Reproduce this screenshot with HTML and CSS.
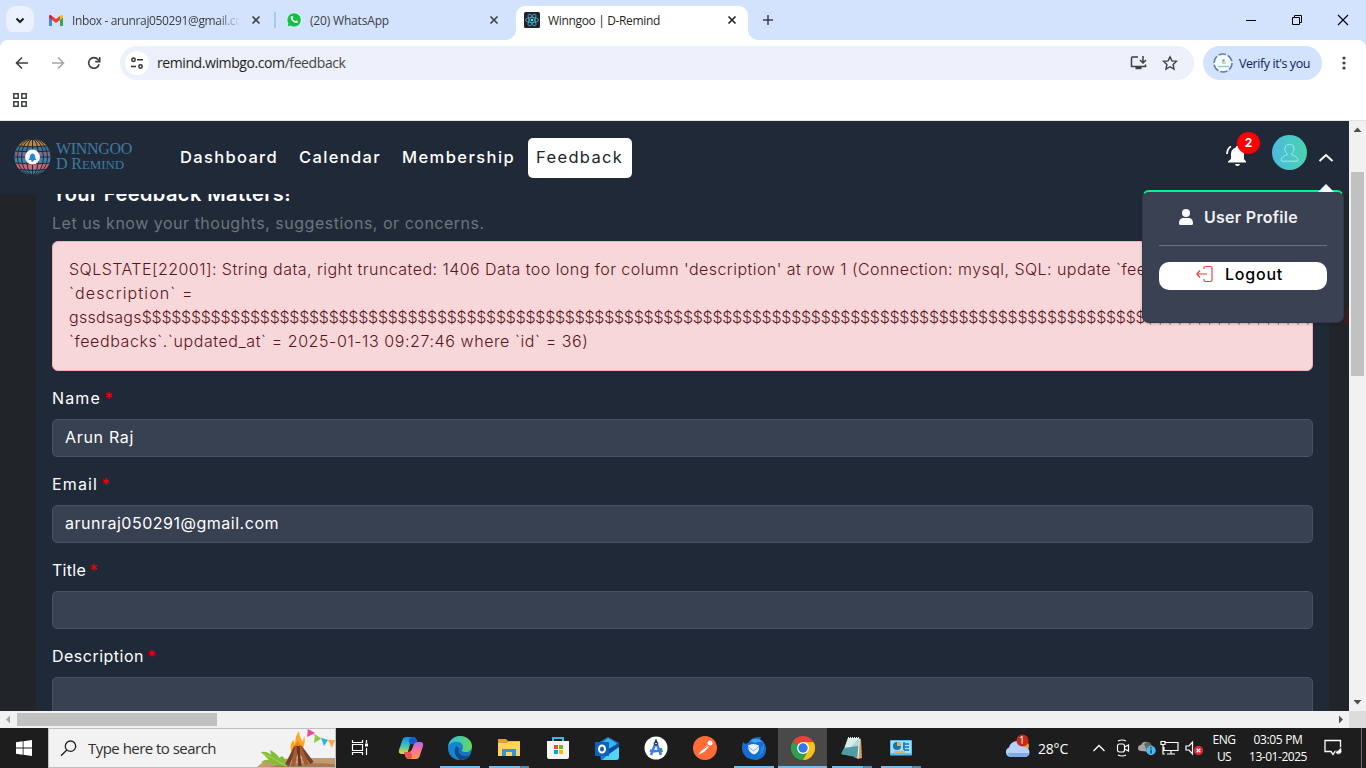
FILE: index.html
```html
<!DOCTYPE html>
<html lang="en">
<head>
<meta charset="utf-8">
<title>Winngoo | D-Remind</title>
<link rel="stylesheet" href="styles.css">
</head>
<body>
<div class="screen">
  <div class="tabstrip">
    <div class="tab-search"><svg width="28" height="28"><path d="M10.500 12.500l3.500 3.500 3.500-3.500" fill="none" stroke="#1f1f1f" stroke-width="2"/></svg></div>
    <div class="tab tab-mail">
      <svg width="14" height="11" viewBox="0 0 14 11"><path d="M0 2v8.200q0 .8.8.8H3V4.500z" fill="#4285f4"/><path d="M14 2v8.200q0 .8-.8.8H11V4.500z" fill="#34a853"/><path d="M11 1.200v3.600l3-2.300V1.500C14 0 12.500-.4 11.500.5z" fill="#fbbc04"/><path d="M3 1.200v3.600L0 2.500V1.500C0 0 1.500-.4 2.500.5z" fill="#c5221f"/><path d="M3 1l4 3.100L11 1v3.900L7 8 3 4.900z" fill="#ea4335"/></svg>
      <span class="tab-title fade">Inbox - arunraj050291@gmail.co</span>
      <svg class="close" width="10" height="10"><path d="M1.500 1.500l7 7m0-7l-7 7" stroke="#3c4043" stroke-width="1.600"/></svg>
    </div>
    <div class="tab tab-chat">
      <svg width="16" height="16" viewBox="0 0 16 16"><path d="M1 15l1-3.600A7 7 0 1 1 4.600 14z" fill="#0dc143" stroke="#fff" stroke-width=".6"/><path d="M5.400 4.200c-1.300.8-1 2.600.5 4.300s3.700 3 5 2.500 1.100-1.700.7-2L10 8.300l-.9.900C8 8.700 7.200 7.900 6.700 6.900l.7-.9-.7-1.600q-.4-.6-1.300-.2z" fill="#fff"/></svg>
      <span class="tab-title t-chat">(20) WhatsApp</span>
      <svg class="close" width="10" height="10"><path d="M1.500 1.500l7 7m0-7l-7 7" stroke="#3c4043" stroke-width="1.600"/></svg>
    </div>
    <div class="tab tab-active">
      <svg width="16" height="16" viewBox="0 0 16 16"><rect width="16" height="16" rx="1.500" fill="#20232a"/><g fill="none" stroke="#4fb3cf" stroke-width=".8"><ellipse cx="8" cy="8" rx="6.500" ry="2.600"/><ellipse cx="8" cy="8" rx="6.500" ry="2.600" transform="rotate(60 8 8)"/><ellipse cx="8" cy="8" rx="6.500" ry="2.600" transform="rotate(120 8 8)"/></g><circle cx="8" cy="8" r="1.300" fill="#61dafb"/></svg>
      <span class="tab-title t-active">Winngoo | D-Remind</span>
      <svg class="close" width="10" height="10"><path d="M1.500 1.500l7 7m0-7l-7 7" stroke="#1f1f1f" stroke-width="1.600"/></svg>
    </div>
    <svg class="new-tab" width="12" height="12"><path d="M6 1v10M1 6h10" stroke="#3c4043" stroke-width="1.500"/></svg>
    <div class="window-controls">
      <svg width="46" height="40"><path d="M18 20.500h10" stroke="#000"/></svg>
      <svg width="46" height="40"><path d="M18.500 17.500h7v7h-7zM20.500 17.500v-2h7v7h-2" fill="none" stroke="#000"/></svg>
      <svg width="46" height="40"><path d="M18 15l10 10m0-10L18 25" stroke="#000" stroke-width="1.100"/></svg>
    </div>
  </div>

  <div class="toolbar">
    <svg class="nav-icon" width="16" height="16"><path d="M14 8H3M8 2.500L2.500 8 8 13.500" fill="none" stroke="#3c4043" stroke-width="1.600"/></svg>
    <svg class="nav-icon" width="16" height="16"><path d="M2 8h11M8 2.500L13.500 8 8 13.500" fill="none" stroke="#a5a7aa" stroke-width="1.600"/></svg>
    <svg class="nav-icon" width="16" height="16"><path d="M13.100 9.200A5.300 5.300 0 1 1 12 4.500L13.500 6" fill="none" stroke="#3c4043" stroke-width="1.600"/><path d="M13.700 2v4.600H9.200" fill="none" stroke="#3c4043" stroke-width="1.600"/></svg>
    <div class="omnibox">
      <span class="site-info"><svg width="14" height="14" fill="none" stroke="#303134" stroke-width="1.500"><circle cx="3.500" cy="3.800" r="1.700"/><path d="M7 3.800h6M1 10.500h5"/><circle cx="10.500" cy="10.500" r="1.700"/></svg></span>
      <span class="url">remind.wimbgo.com<i>/feedback</i></span>
      <svg class="install" width="18" height="16"><path d="M8 2H2.500Q1.500 2 1.500 3v8.500h14V9.500" fill="none" stroke="#3c4043" stroke-width="1.500"/><path d="M5.500 12h6v2.200h-6z" fill="#3c4043"/><path d="M13 1v6.500M10 5l3 3 3-3" fill="none" stroke="#3c4043" stroke-width="1.500"/></svg>
      <svg width="16" height="16"><path d="M8 1.800l1.900 4.100 4.500.5-3.300 3.100.9 4.500L8 11.700 4 14l.9-4.500L1.600 6.400l4.500-.5z" fill="none" stroke="#3c4043" stroke-width="1.400"/></svg>
    </div>
    <div class="profile-chip">
      <svg width="20" height="20"><circle cx="10" cy="10" r="9" fill="#f5fafb" stroke="#5f7fad" stroke-width="1.500" stroke-dasharray="7.500 1.900"/><circle cx="10.500" cy="7.500" r="1.300" fill="#7d9bb8"/><path d="M9 10h4" stroke="#8fb1b1"/><path d="M5 13.500h11" stroke="#8ccdbf" stroke-width="1.300"/></svg>
      <span class="verify">Verify it's you</span>
    </div>
    <svg class="kebab" width="4" height="16" fill="#3c4043"><circle cx="2" cy="3" r="1.600"/><circle cx="2" cy="8" r="1.600"/><circle cx="2" cy="13" r="1.600"/></svg>
  </div>
  <div class="bookmarks"><svg width="14" height="14" fill="none" stroke="#3c4043" stroke-width="1.500"><path d="M.8.800h4.400v4.400H.8zM8.800.800h4.400v4.400H8.800zM.8 8.800h4.400v4.400H.8zM8.800 8.800h4.400v4.400H8.800z"/></svg></div>

  <div class="viewport">
    <div class="page">
      <header class="site-header">
        <div class="brand">
          <svg width="37" height="38" viewBox="0 0 37 38"><defs><clipPath id="globe"><circle cx="18.500" cy="19" r="18"/></clipPath></defs><g clip-path="url(#globe)"><path d="M0 0h37v8H0z" fill="#b98a45"/><path d="M0 8h37v6H0z" fill="#3f7692"/><path d="M0 13h37v7H0z" fill="#776b91"/><path d="M0 19h37v6H0z" fill="#3f86a8"/><path d="M0 25h37v6H0z" fill="#c66a76"/><path d="M0 31h37v7H0z" fill="#427f9b"/><g fill="none" stroke="#202938"><path d="M18.500 0v38M0 7.500q18.500 3 37 0M0 13q18.500 2 37 0M0 19h37M0 25q18.500 2 37 0M0 31q18.500 3 37 0"/><ellipse cx="18.500" cy="19" rx="6" ry="18"/><ellipse cx="18.500" cy="19" rx="11" ry="18"/><ellipse cx="18.500" cy="19" rx="15" ry="18"/></g></g><circle cx="18.500" cy="19" r="7.500" fill="#f4f7fa"/><path d="M14.500 22q1.500-1.200 1.500-4 .3-2.200 2.500-2.500 2.200.3 2.500 2.500 0 2.800 1.500 4z" fill="#2b87cf"/><circle cx="18.500" cy="22.500" r="1.200" fill="#2b87cf"/></svg>
          <div class="brand-name"><span class="b1">WINNGOO</span><span class="b2">D R<small>EMIND</small></span></div>
        </div>
        <nav class="menu">
          <span class="m m1">Dashboard</span><span class="m m2">Calendar</span><span class="m m3">Membership</span><span class="m-active"><span class="m m4">Feedback</span></span>
        </nav>
        <div class="account">
          <div class="bell"><svg width="22" height="24" viewBox="0 0 22 24"><path d="M2 18.500h18v-1l-2-2.500V10q0-5-4.800-6.500a1.700 1.700 0 0 0-3.400 0Q5 5 5 10v5l-3 2.500z" fill="#fff"/><path d="M9 20h5q-.4 2-2.500 2T9 20z" fill="#fff"/><path d="M1 10q.2-5.500 4-7.500" fill="none" stroke="#fff" stroke-width="1.800"/></svg><span class="badge">2</span></div>
          <svg width="35" height="35" viewBox="0 0 35 35"><defs><linearGradient id="av"><stop stop-color="#4abbe0"/><stop offset="1" stop-color="#4bd3ad"/></linearGradient></defs><circle cx="17.500" cy="17.500" r="17.500" fill="url(#av)"/><path d="M17.500 9.300c-3 0-4.600 2-4.600 4.500 0 2 .9 3.700 2.300 4.900v1.100c-2.800 1.200-6 1.700-6 5.700 0 .5.300.7.700.7h15.200c.5 0 .7-.2.700-.7 0-4-3.200-4.500-6-5.700v-1.100c1.400-1.200 2.300-2.900 2.300-4.900 0-2.500-1.600-4.500-4.600-4.500z" fill="none" stroke="#a3ebe5"/></svg>
          <svg class="caret" width="16" height="10"><path d="M1.500 8L8 2l6.500 6" fill="none" stroke="#fff" stroke-width="2"/></svg>
        </div>
      </header>
      <main class="panel">
        <h1 class="title"><span class="ttl">Your Feedback Matters!</span></h1>
        <p class="subtitle"><span class="sub">Let us know your thoughts, suggestions, or concerns.</span></p>
        <div class="alert">
          <div><span class="a1">SQLSTATE[22001]: String data, right truncated: 1406 Data too long for column 'description' at row 1 (Connection: mysql, SQL: update `feed</span></div>
          <div><span class="a2">`description` =</span></div>
          <div><span class="a3">gssdsags</span><span class="dollars">$$$$$$$$$$$$$$$$$$$$$$$$$$$$$$$$$$$$$$$$$$$$$$$$$$$$$$$$$$$$$$$$$$$$$$$$$$$$$$$$$$$$$$$$$$$$$$$$$$$$$$$$$$$$$$$$$$$$$$$$$$$$$</span></div>
          <div><span class="a4">`feedbacks`.`updated_at` = 2025-01-13 09:27:46 where `id` = 36)</span></div>
        </div>
        <label class="field"><span class="lbl"><span class="l1">Name</span> <b>*</b></span><span class="input"><span class="v1">Arun Raj</span></span></label>
        <label class="field"><span class="lbl"><span class="l2">Email</span> <b>*</b></span><span class="input"><span class="v2">arunraj050291@gmail.com</span></span></label>
        <label class="field"><span class="lbl"><span class="l3">Title</span> <b>*</b></span><span class="input"></span></label>
        <label class="field"><span class="lbl"><span class="l4">Description</span> <b>*</b></span><span class="input tall"></span></label>
      </main>
      <div class="dropdown">
        <div class="profile-link"><svg width="14" height="16"><circle cx="7" cy="4" r="4" fill="#f8f9fa"/><path d="M0 14.500C0 10.500 2 9 4.500 9h5c2.500 0 4.500 1.500 4.500 5.500q0 1.500-1.500 1.500h-11Q0 16 0 14.500z" fill="#f8f9fa"/></svg><span class="up">User Profile</span></div>
        <div class="divider"></div>
        <div class="logout"><svg width="17" height="18"><path d="M8 4V3q0-1.500 1.500-1.500h5Q16 1.500 16 3v12q0 1.500-1.500 1.500h-5Q8 16.500 8 15v-1" fill="none" stroke="#ff3b43" stroke-width="1.200"/><path d="M11 9H1M4 5.500L.8 9 4 12.500" fill="none" stroke="#ff3b43" stroke-width="1.200"/></svg><span class="lo">Logout</span></div>
      </div>
    </div>
    <div class="vscroll"><svg width="17" height="17"><path d="M4.500 11h8L8.500 6.500z" fill="#505050"/></svg><div class="vthumb"></div><svg class="end" width="17" height="17"><path d="M4.500 6h8l-4 4.500z" fill="#505050"/></svg></div>
  </div>
  <div class="hscroll"><svg width="17" height="17"><path d="M10 4.500v8L6 8.500z" fill="#a3a3a3"/></svg><div class="hthumb"></div><svg class="end-h" width="17" height="17"><path d="M7 4.500v8l4-4z" fill="#505050"/></svg><div class="corner"></div></div>

  <div class="taskbar">
    <div class="start"><svg width="16" height="16" fill="#fff"><path d="M0 2.200L6.700 1.300v6.200H0zM7.500 1.200L16 0v7.500H7.500zM0 8.400h6.700v6.300L0 13.800zM7.500 8.400H16V16l-8.500-1.200z"/></svg></div>
    <div class="search">
      <svg width="17" height="17"><circle cx="10.500" cy="6.200" r="5.200" fill="none" stroke="#222" stroke-width="1.300"/><path d="M6.800 10L1 15.800" stroke="#222" stroke-width="1.400"/></svg>
      <span class="st">Type here to search</span>
      <svg class="campfire" width="78" height="38" viewBox="0 0 78 38"><path d="M0 38q8-8 22-8l30-1h26v9z" fill="#c39a72"/><path d="M12 38q25-6 66-3v3z" fill="#a97a53"/><path d="M30 37Q18 37 12 33l-8 1q3-4 8-3L4 23q6-1 10 3l-1-5q8 4 9 8l3-2q5 4 5 10z" fill="#83bd35"/><path d="M7 25q10 4 22 12" stroke="#a8d65c" fill="none"/><path d="M36 25q-5-6 0-14 2 3 2 5 0-9 4-14 0 6 4 11l1-6q2 6-1 12l-2 6z" fill="#ffa51f"/><path d="M37 24q-1-6 4-12 4 6 3 14z" fill="#ff7b19"/><path d="M39 23l3-7 2 8z" fill="#ffdf58"/><g stroke-width="4" fill="none"><path d="M39 18L30 36M43 18l12 16" stroke="#77402a"/><path d="M40 17l-4 20M42 17l8 19" stroke="#a45c35"/><path d="M41 17l2 20" stroke="#69351f" stroke-width="3"/></g><path d="M50 1q14 11 28 11" fill="none" stroke="#aaa" stroke-width=".7"/><path d="M51 0l7 4-8 4z" fill="#f0469d"/><path d="M58 5l6 5-7 4z" fill="#8dcc3c"/><path d="M64 9l7 2-4 6z" fill="#29b5df"/><path d="M71 11h7l-3 8z" fill="#f8ad43"/></svg>
    </div>
    <div class="task view"><svg width="18" height="18" fill="none" stroke="#fff" stroke-width="1.200"><path d="M1.500 1v2.500h10V1M1.500 5.500h10v6h-10zM1.500 16v-2.500h10V16M15.500 1v3M15.500 9v7"/><path d="M14 4.500h3v3h-3z" fill="#fff" stroke="none"/></svg></div>
    <div class="task"><svg width="26" height="24" viewBox="0 0 26 24"><defs><linearGradient id="c1" x2="0" y2="1"><stop stop-color="#168be7"/><stop offset=".5" stop-color="#38c4b8"/><stop offset="1" stop-color="#f2d531"/></linearGradient><linearGradient id="c2" x2="0" y2="1"><stop stop-color="#b765f0"/><stop offset=".5" stop-color="#fb7494"/><stop offset="1" stop-color="#ff9b45"/></linearGradient></defs><path d="M8 1h7q3 0 4 4l1 3h-4q-3 0-4 3l-2 5q-1 2-4 2H4q-4 0-3-4l3-9Q5 1 8 1z" fill="url(#c1)"/><path d="M15 1q3 0 4 4l1 3h-4q-2 0-3 2L11 6q-1-4 4-5z" fill="#1857cc"/><path d="M18 23h-7q-3 0-4-4l-1-3h4q3 0 4-3l2-5q1-2 4-2h2q4 0 3 4l-3 9q-1 4-4 4z" fill="url(#c2)"/><path d="M11 23q-3 0-4-4l-1-3h4l2-1 2 4q1 4-3 4z" fill="#ee5250"/><path d="M12 8l3 0-2 7-3 1z" fill="#222"/></svg></div>
    <div class="task run"><svg width="24" height="24" viewBox="0 0 24 24"><defs><linearGradient id="e1"><stop stop-color="#2abbe8"/><stop offset="1" stop-color="#67d957"/></linearGradient></defs><circle cx="12" cy="12" r="12" fill="#1674bd"/><path d="M0 11C1 4 6 0 12 0c7 0 12 5 12 10 0 4-3 6-6 6-4 0-5-1-3.500-3C16 10 13 6 9 6 5 6 1 8 0 11z" fill="url(#e1)"/><path d="M0 12c1-4 5-6 9-6 5 0 7 4 5.500 7-3-3-6 0-4 4 2 4 7 5 12 2Q19 24 12 24 1 23 0 12z" fill="#1685d0"/><path d="M8 10q-4 8 4 14 7 0 10.500-5C15 22 9 18 11 12z" fill="#104c8d"/></svg></div>
    <div class="task run multi"><svg width="22" height="20" viewBox="0 0 22 20"><path d="M0 1h8l2 2h12v3H0z" fill="#e5a21a"/><path d="M0 5h9l2-1.500h11V18H0z" fill="#ffd45e"/><path d="M4 18v-7h14v7h-4v-4H8v4z" fill="#3695df"/></svg></div>
    <div class="task"><svg width="24" height="24" viewBox="0 0 24 24"><path d="M7 6V2h10v4" fill="none" stroke="#31bde9" stroke-width="2"/><path d="M1 5h22v16q0 2-2 2H3q-2 0-2-2z" fill="#f5f5f5"/><path d="M8 9h4v4H8z" fill="#f05123"/><path d="M13 9h4v4h-4z" fill="#7db700"/><path d="M8 14h4v4H8z" fill="#00a3ee"/><path d="M13 14h4v4h-4z" fill="#ffb800"/></svg></div>
    <div class="task"><svg width="24" height="23" viewBox="0 0 24 23"><path d="M3 6l10-6 11 6v14q0 3-3 3H6z" fill="#1279d5"/><path d="M8 5l5-4 8 5v5l-7 5z" fill="#38b4f2"/><path d="M24 8v12q0 3-3 3H7z" fill="#50d5f6"/><path d="M24 6v4l-10 7-4-3z" fill="#0b4c9d"/><path d="M0 5h14v14H0z" fill="#1062b9"/><ellipse cx="7" cy="12" rx="3" ry="3.600" fill="none" stroke="#fff" stroke-width="2"/></svg></div>
    <div class="task"><svg width="24" height="24" viewBox="0 0 24 24"><circle cx="12" cy="12" r="11.500" fill="#fff"/><path d="M15 12h3l1 4-4 1z" fill="#32a852"/><path d="M12 6L7 19M12 6l5 13M6 14.500q6 2 11-1" fill="none" stroke="#3d7cf4" stroke-width="2.500"/><path d="M12 3.500v3" stroke="#263b55" stroke-width="2"/><circle cx="12" cy="7.500" r="2.300" fill="#263b55"/><circle cx="12" cy="7.500" r=".8" fill="#fff"/></svg></div>
    <div class="task"><svg width="24" height="24" viewBox="0 0 24 24"><circle cx="12" cy="12" r="12" fill="#ff6c37"/><path d="M5 19l4-5 5-5 2 2-5 5z" fill="#fff"/><circle cx="17" cy="7" r="2.500" fill="#fff"/><path d="M9 14l7-5" stroke="#c94f27" stroke-width=".8"/></svg></div>
    <div class="task run"><svg width="24" height="24" viewBox="0 0 24 24"><path d="M1 6q2 3 5 1Q10 0 19 1l-1 2q6 4 6 10 0 10-11 11Q1 23 0 13q0-4 1-7z" fill="#176ed2"/><path d="M8 5q6-5 13 1-5-1-8 1z" fill="#3ba8f4"/><path d="M22 8q1 8-6 13 3-4 3-9z" fill="#2588e4"/><path d="M6 9.500q5-3 11 0 1 7-5 9-6-2-6-9z" fill="#eaf2fc"/><path d="M6 10.500l5.500 4.500 5.500-4.500" fill="none" stroke="#86a7d7"/></svg></div>
    <div class="task current"><svg width="24" height="24" viewBox="0 0 24 24"><path d="M12 12L1.600 6A12 12 0 0 1 22.400 6z" fill="#ea4335"/><path d="M12 12H22.800L22.400 6A12 12 0 0 1 12 24l-1-5z" fill="#fbc116"/><path d="M12 12l5 3-5 9A12 12 0 0 1 1.600 6z" fill="#2ba24c"/><path d="M12 6h10.400A12 12 0 0 1 24 12l-7 1z" fill="#fbc116"/><circle cx="12" cy="12" r="6" fill="#fff"/><circle cx="12" cy="12" r="4.700" fill="#3479e8"/></svg></div>
    <div class="task run multi"><svg width="24" height="24" viewBox="0 0 24 24"><path d="M18 2l3 1 1 19-4 1-4-2z" fill="#c9a36e"/><path d="M8 2h11l-1 19-16-3z" fill="#a9d8da"/><path d="M8 2h11l-9 10-5-1z" fill="#d9ecec"/><path d="M4 12l14-2-.5 11.500L1 18z" fill="#4f9ba6"/><path d="M8 2h11" stroke="#eee" stroke-width="2" stroke-dasharray="1 1"/><path d="M19.500 3l-1.500 19" stroke="#eee"/></svg></div>
    <div class="task run multi"><svg width="22" height="18" viewBox="0 0 22 18"><rect width="22" height="15.500" y="1" rx="1" fill="#59bce9"/><path d="M1 2h20v12H1z" fill="#9ee1fa"/><circle cx="7" cy="7" r="4" fill="#1772b7"/><path d="M7 7V3a4 4 0 0 1 4 4z" fill="#fbad22"/><path d="M13 5h6M13 8h6M14 11h5M14 3v8" stroke="#1772b7" stroke-width="1.400"/><path d="M4 13h11" stroke="#f8a52c" stroke-width="1.500"/></svg></div>
    <div class="tray">
      <div class="weather"><svg width="27" height="26" viewBox="0 0 27 26"><circle cx="19" cy="12" r="5" fill="#f89a22"/><path d="M5 23a5 5 0 0 1-1-9.500Q6 7 12 7q5 0 7 6 5 0 5.500 5 0 5-5 5z" fill="#b8d0f7"/><path d="M3 19h21q-1 4-5 4H6q-3-1-3-4z" fill="#7ea9ed"/><circle cx="17.500" cy="6.500" r="6" fill="#c42b1c"/></svg><span class="alert-count">1</span></div>
      <span class="temp">28°C</span>
      <svg class="up-arrow" width="14" height="8"><path d="M1.500 7L7 1.500 12.500 7" fill="none" stroke="#fff" stroke-width="1.300"/></svg>
      <svg width="24" height="18" fill="none" stroke="#fff" stroke-width="1.200"><rect x="6.500" y="5" width="7" height="8" rx="2"/><path d="M13.500 8l4-2v6l-4-2M7 2q4-2 8 0M7 16q4 2 8 0"/></svg>
      <svg width="24" height="18"><path d="M6 12a3 3 0 0 1 0-6q2-4 6-3 3 1 3 4 4 0 4 3 0 2-3 3z" fill="#a5a5a5"/><path d="M9 5q5-5 8 2l-5 5z" fill="#666"/><circle cx="16" cy="11.500" r="4.700" fill="#4bbcf2"/><path d="M16 10.500v4M16 8v1.400" stroke="#174965" stroke-width="1.500"/></svg>
      <svg width="24" height="18" fill="none" stroke="#fff" stroke-width="1.200"><path d="M6 3.500h13v8H5V8M8 15h8M12 11.500V15M2 2.500h4v3H2zM4 5.500V15h2"/></svg>
      <svg width="24" height="18"><path d="M3 7h3l3.500-4v12L6 11H3z" fill="none" stroke="#fff" stroke-width="1.200"/><circle cx="15.500" cy="11.500" r="4.700" fill="#da2838"/><path d="M13.700 9.700l3.600 3.600m0-3.600l-3.600 3.600" stroke="#fff" stroke-width="1.300"/></svg>
      <div class="lang"><span class="g1">ENG</span><span class="g2">US</span></div>
      <div class="clock"><span class="k1">03:05 PM</span><span class="k2">13-01-2025</span></div>
      <svg class="notice" width="18" height="18"><path d="M1 1.500h15.500v11H11l-2 3-2-3H1z" fill="none" stroke="#fff" stroke-width="1.300"/><path d="M16.500 8q-1.500 4-5.500 5 1.500 3.500 5 2t.5-7z" fill="#fff" stroke="#1d1d1d" stroke-width=".7"/></svg>
    </div>
  </div>
</div>
</body>
</html>
```
FILE: styles.css
```css
* { box-sizing: border-box; }
body { margin: 0; overflow: hidden; font-family: Inter, "Open Sans", sans-serif; }
svg { display: block; flex: none; }
span { white-space: pre; }
.screen { width: 1366px; height: 768px; display: flex; flex-direction: column; overflow: hidden; }

/* Browser tab strip */
.tabstrip { height: 40px; flex: none; display: flex; background: #d3e2fd; font: 12px "Open Sans", sans-serif; color: #3c4043; }
.tab-search { width: 28px; height: 28px; margin: 6px 4px 0 6px; border-radius: 10px; background: #ebf2fe; }
.tab { height: 40px; display: flex; align-items: center; flex: none; }
.tab .close { margin-left: auto; }
.tab-mail { width: 238px; padding: 0 13px 0 11px; border-right: 2px solid; border-image: linear-gradient(transparent 12px, #a8c7fa 12px, #a8c7fa 28px, transparent 28px) 1; }
.fade { width: 169px; overflow: hidden; margin-left: 9px; letter-spacing: -0.365px; -webkit-mask-image: linear-gradient(90deg, #000 146px, transparent 168px); mask-image: linear-gradient(90deg, #000 146px, transparent 168px); }
.tab-chat { width: 240px; padding: 0 17px 0 10px; }
.tab-chat .tab-title { margin-left: 8px; }
.t-chat { letter-spacing: -0.177px; }
.tab-active { position: relative; width: 232px; height: 34px; margin-top: 6px; padding: 0 11px 6px 8px; background: #fff; border-radius: 9px 9px 0 0; color: #1f1f1f; }
.tab-active::before, .tab-active::after { content: ""; position: absolute; bottom: 0; width: 10px; height: 10px; }
.tab-active::before { left: -10px; background: radial-gradient(circle at 0 0, transparent 9.5px, #fff 10px); }
.tab-active::after { right: -10px; background: radial-gradient(circle at 100% 0, transparent 9.5px, #fff 10px); }
.tab-active .tab-title { margin-left: 8px; }
.t-active { letter-spacing: -0.343px; }
.new-tab { margin: 14px 0 0 14px; }
.window-controls { display: flex; margin-left: auto; }

/* Address bar */
.toolbar { height: 46px; flex: none; display: flex; align-items: center; background: #fff; padding-left: 14px; border-radius: 8px 8px 0 0; box-shadow: 0 -8px 0 #d3e2fd; }
.nav-icon { margin-right: 20px; }
.omnibox { width: 1074px; height: 34px; margin-left: -2px; border-radius: 17px; background: #ecf0fa; display: flex; align-items: center; padding: 0 16px 0 5px; }
.site-info { width: 24px; height: 24px; border-radius: 50%; background: #fff; display: grid; place-items: center; margin-right: 8px; }
.url { font: 14px "Open Sans", sans-serif; color: #1f1f1f; letter-spacing: -0.41px; margin-top: -1px; }
.url i { font-style: normal; color: #474747; }
.install { margin-left: auto; margin-right: 14px; }
.profile-chip { width: 119px; height: 34px; margin-left: 9px; border-radius: 17px; background: #d3e2fd; display: flex; align-items: center; padding-left: 10px; }
.verify { margin-left: 6px; font: 12.5px "Open Sans", sans-serif; color: #0a2357; letter-spacing: -0.431px; }
.kebab { margin-left: 20px; }
.bookmarks { height: 35px; flex: none; background: #fff; padding: 7px 13px; border-bottom: 1px solid #e0e5e2; }

/* Site header */
.viewport { height: 590px; flex: none; display: flex; }
.page { position: relative; width: 1349px; height: 590px; overflow: hidden; background: #212529; display: flex; flex-direction: column; }
.site-header { height: 73px; flex: none; background: #202938; display: flex; align-items: center; padding-left: 14px; position: relative; z-index: 1; }
.brand { display: flex; width: 166px; align-items: center; margin-top: -2px; }
.brand-name { display: flex; flex-direction: column; margin-left: 5px; font: 16px/15px "Liberation Serif", serif; color: #3f7ba0; }
.brand-name span { align-self: flex-start; }
.brand-name small { font-size: 13px; }
.b1 { letter-spacing: -0.315px; }
.b2 { letter-spacing: -0.105px; }
.menu { display: flex; align-items: center; color: #fff; font-size: 16.5px; font-weight: 500; margin-top: -1px; }
.m1, .m2 { margin-right: 21px; }
.m3 { margin-right: 13px; }
.m1 { letter-spacing: 1.33px; }
.m2 { letter-spacing: 1.35px; }
.m3 { letter-spacing: 1.42px; }
.m4 { letter-spacing: 1.33px; }
.m-active { width: 104px; height: 40px; padding: 0 8px 2px; background: #fff; border-radius: 5px; display: flex; align-items: center; color: #20252c; font-weight: 400; margin-top: 2px; }
.account { margin: -10px 0 0 auto; display: flex; align-items: center; padding-right: 15px; height: 62px; }
.bell { position: relative; margin-right: 24px; padding-top: 6px; }
.badge { position: absolute; left: 11px; top: -6px; width: 23px; height: 22px; border-radius: 50%; background: #f00; color: #fff; font-size: 12px; line-height: 22px; font-weight: 700; text-align: center; }
.caret { margin: 11px 0 0 11px; }

/* Feedback form */
.panel { width: 1293px; margin-left: 36px; padding: 0 16px; flex: none; background: #202938; color: #fff; font-size: 16px; line-height: 24px; }
.title { margin: -12px 0 0; font-size: 20px; line-height: 24px; font-weight: 600; }
.ttl { letter-spacing: 0.428px; }
.subtitle { margin: 5px 0 0; line-height: 24px; color: #6c757d; letter-spacing: 0.51px; }
.alert { height: 130px; margin: 6px 0 15px; padding: 15px 16px; border: 1px solid #f1aeb5; border-radius: 6px; background: #f8d7da; color: #58151c; white-space: nowrap; font-weight: 350; }
.alert div { height: 24px; }
.a1 { letter-spacing: 0.452px; }
.a2 { letter-spacing: 1.13px; }
.a3 { letter-spacing: 0.25px; }
.a4 { letter-spacing: 0.583px; }
.dollars { letter-spacing: -0.27px; }
.field { display: flex; flex-direction: column; margin-bottom: 15px; }
.lbl { height: 33px; line-height: 24px; }
.lbl b { color: #f00; font-weight: 400; margin-left: -1px; }
.l1 { letter-spacing: 1.152px; }
.l2 { letter-spacing: 1.125px; }
.l3 { letter-spacing: 0.272px; }
.l4 { letter-spacing: 0.494px; }
.v1 { letter-spacing: 0.68px; }
.v2 { letter-spacing: 0.51px; }
.input { height: 38px; padding: 0 12px; line-height: 34px; background: #384152; border: 1px solid #495263; border-radius: 5px; }
.tall { height: 100px; }

/* Account menu */
.dropdown { position: absolute; z-index: 2; left: 1142px; top: 69px; width: 202px; height: 133px; background: #394152; border: 1px solid #313848; border-top: 2px solid #00f58c; border-radius: 7px; padding: 0 16px; box-shadow: 0 1px 3px #0003; }
.dropdown::before { content: ""; position: absolute; right: 9px; top: -8px; border: 8px solid transparent; border-top: 0; border-bottom-color: #fff; }
.profile-link { height: 53px; display: flex; align-items: center; padding: 0 0 4px 20px; color: #f0f1f3; font-size: 16px; font-weight: 600; }
.up { margin-left: 11px; letter-spacing: 0.281px; }
.divider { height: 1px; background: #6b7280; margin-bottom: 16px; }
.logout { height: 28px; border-radius: 10px; background: #fff; color: #000; display: flex; align-items: center; padding: 0 0 4px 37px; font-size: 16px; font-weight: 500; }
.lo { margin-left: 12px; letter-spacing: 0.773px; }

/* Scrollbars */
.vscroll { width: 17px; background: #f1f1f1; display: flex; flex-direction: column; }
.vthumb { width: 13px; height: 204px; margin: 34px 0 0 2px; background: #c1c1c1; }
.end { margin-top: auto; }
.hscroll { height: 17px; flex: none; display: flex; align-items: center; background: #f1f1f1; }
.hthumb { width: 200px; height: 13px; background: #c1c1c1; }
.end-h { margin-left: auto; }
.corner { width: 17px; height: 17px; background: #dcdcdc; }

/* Desktop taskbar */
.taskbar { height: 40px; flex: none; display: flex; background: #1d1d1d; color: #fff; font: 12px "Open Sans", sans-serif; }
.start { width: 48px; display: grid; place-items: center; }
.search { width: 288px; border: 1px solid #bfbfbf; background: #f2f2f2; display: flex; align-items: center; padding-left: 11px; }
.st { margin-left: 11px; color: #303030; font-size: 15px; letter-spacing: -0.529px; }
.campfire { margin-left: auto; }
.task { width: 49px; display: grid; place-items: center; position: relative; }
.view { width: 50px; padding-right: 2px; }
.run::after { content: ""; position: absolute; left: 5px; bottom: 0; width: 40px; height: 2px; background: #76b9ed; }
.multi::after { background: linear-gradient(90deg, #76b9ed 31px, #3b5e79 31px, #5788ad 32px); }
.current { background: #494949; border-bottom: 2px solid #76b9ed; padding-top: 2px; }
.tray { flex: 1; display: flex; align-items: center; border-right: 1px solid #6c6c6c; margin-right: 4px; padding-left: 80px; }
.weather { position: relative; margin-right: 6px; margin-top: -2px; }
.alert-count { position: absolute; left: 14px; top: -1px; font-size: 10px; }
.temp { font-size: 14px; letter-spacing: -0.207px; }
.up-arrow { margin: 0 5px 0 24px; }
.lang, .clock { display: flex; flex-direction: column; align-items: center; line-height: 17px; }
.lang { width: 32px; margin-left: 1px; }
.clock { width: 76px; }
.g1 { letter-spacing: -0.479px; }
.g2 { letter-spacing: -0.664px; }
.k1 { letter-spacing: -0.342px; }
.k2 { letter-spacing: -0.463px; }
.notice { margin-left: 8px; }
```
